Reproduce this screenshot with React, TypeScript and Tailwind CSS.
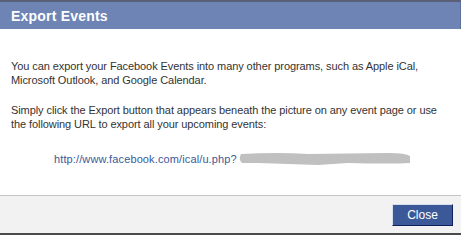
import React from 'react';

const font = { fontFamily: '"Liberation Sans", Arial, sans-serif' };

const Redacted = () => (
    <svg width="174" height="16" viewBox="0 0 174 16" className="ml-[1px]">
        <path
            d="M3 3 Q40 1 70 3 L150 2 Q168 2 172 5 L172 12 Q150 13 110 12 L80 14 Q50 13 20 12 L4 12 Q0 8 3 3 Z"
            fill="#c0c0c0"/>
    </svg>
);

export default function App() {
    return (
        <div className="w-[461px] h-[235px] flex flex-col bg-white border-t-2 border-t-[#596078] border-b-2 border-b-[#4a4a4a]" style={font}>
            <div className="h-[27px] bg-[#6d84b4] border-r border-r-[#5c6f99] flex items-center px-[11px]">
                <h1 className="text-[14px] font-bold text-white leading-none tracking-[0.2px]">Export Events</h1>
            </div>

            <div className="flex-1 px-[11px] pt-[30px] text-[11px] leading-[14px] text-[#333] tracking-[-0.08px]">
                <p>You can export your Facebook Events into many other programs, such as Apple iCal, Microsoft Outlook, and Google Calendar.</p>

                <p className="mt-[16px]">Simply click the Export button that appears beneath the picture on any event page or use the following URL to export all your upcoming events:</p>

                <div className="mt-[20px] pl-[43px] flex items-center">
                    <a className="text-[#3b5998] tracking-[0.12px]">http://www.facebook.com/ical/u.php?</a>
                    <Redacted/>
                </div>
            </div>

            <div className="h-[38px] bg-[#f2f2f2] border-t border-t-[#c6c6c6] flex items-center justify-end pr-[8px]">
                <button className="w-[61px] h-[22px] bg-[#3b5998] text-white text-[12px] border border-[#d9dfea] border-r-[#0e1f5b] border-b-[#0e1f5b]">
                    Close
                </button>
            </div>
        </div>
    );
}
